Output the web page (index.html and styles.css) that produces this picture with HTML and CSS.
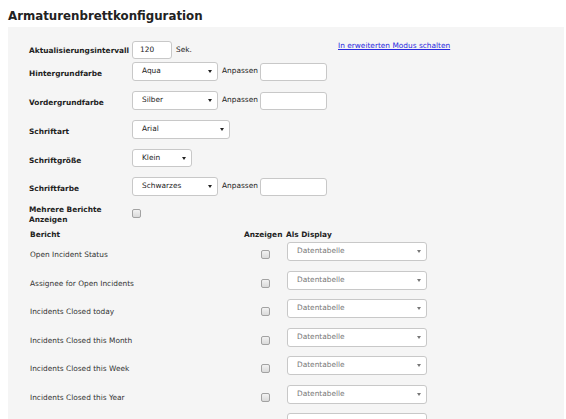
FILE: index.html
```html
<!DOCTYPE html>
<html lang="de">
<head>
<meta charset="utf-8">
<title>Armaturenbrettkonfiguration</title>
<link rel="stylesheet" href="styles.css">
</head>
<body>
<h1 class="title">Armaturenbrettkonfiguration</h1>
<div class="panel">
  <div class="form">
    <div class="row row-first">
      <span class="lbl lbl-first">Aktualisierungsintervall</span>
      <div class="ctrls ctrls-first">
        <div class="field field-sm">120</div>
        <span class="unit">Sek.</span>
      </div>
      <a class="mode-link" href="#">In erweiterten Modus schalten</a>
    </div>
    <div class="row row-tight">
      <span class="lbl">Hintergrundfarbe</span>
      <div class="ctrls">
        <div class="select sel-color"><span>Aqua</span><i class="caret"></i></div>
        <span class="unit">Anpassen</span>
        <div class="field field-custom"></div>
      </div>
    </div>
    <div class="row">
      <span class="lbl">Vordergrundfarbe</span>
      <div class="ctrls">
        <div class="select sel-color"><span>Silber</span><i class="caret"></i></div>
        <span class="unit">Anpassen</span>
        <div class="field field-custom"></div>
      </div>
    </div>
    <div class="row">
      <span class="lbl">Schriftart</span>
      <div class="ctrls">
        <div class="select sel-font"><span>Arial</span><i class="caret"></i></div>
      </div>
    </div>
    <div class="row row-short">
      <span class="lbl">Schriftgröße</span>
      <div class="ctrls">
        <div class="select sel-size"><span>Klein</span><i class="caret"></i></div>
      </div>
    </div>
    <div class="row">
      <span class="lbl">Schriftfarbe</span>
      <div class="ctrls">
        <div class="select sel-color"><span>Schwarzes</span><i class="caret"></i></div>
        <span class="unit">Anpassen</span>
        <div class="field field-custom"></div>
      </div>
    </div>
    <div class="row row-multi">
      <span class="lbl lbl-multi">Mehrere Berichte<br>Anzeigen</span>
      <div class="ctrls">
        <span class="check check-multi"></span>
      </div>
    </div>
  </div>

  <div class="reports">
    <div class="report-head">
      <span class="head-name">Bericht</span>
      <span>Anzeigen</span>
      <span>Als Display</span>
    </div>
    <div class="report-row">
      <span class="report-name">Open Incident Status</span>
      <span class="cell-check"><span class="check check-row"></span></span>
      <div class="select sel-display"><span>Datentabelle</span><i class="caret caret-light"></i></div>
    </div>
    <div class="report-row">
      <span class="report-name">Assignee for Open Incidents</span>
      <span class="cell-check"><span class="check check-row"></span></span>
      <div class="select sel-display"><span>Datentabelle</span><i class="caret caret-light"></i></div>
    </div>
    <div class="report-row">
      <span class="report-name">Incidents Closed today</span>
      <span class="cell-check"><span class="check check-row"></span></span>
      <div class="select sel-display"><span>Datentabelle</span><i class="caret caret-light"></i></div>
    </div>
    <div class="report-row">
      <span class="report-name">Incidents Closed this Month</span>
      <span class="cell-check"><span class="check check-row"></span></span>
      <div class="select sel-display"><span>Datentabelle</span><i class="caret caret-light"></i></div>
    </div>
    <div class="report-row">
      <span class="report-name">Incidents Closed this Week</span>
      <span class="cell-check"><span class="check check-row"></span></span>
      <div class="select sel-display"><span>Datentabelle</span><i class="caret caret-light"></i></div>
    </div>
    <div class="report-row">
      <span class="report-name">Incidents Closed this Year</span>
      <span class="cell-check"><span class="check check-row"></span></span>
      <div class="select sel-display"><span>Datentabelle</span><i class="caret caret-light"></i></div>
    </div>
    <div class="report-row">
      <span class="report-name"></span>
      <span class="cell-check"></span>
      <div class="select sel-display"></div>
    </div>
  </div>
</div>
</body>
</html>
```
FILE: styles.css
```css
html {
  overflow: hidden;
}

body {
  margin: 0;
  padding: 9px 0 0 8px;
  background: #ffffff;
  color: #222222;
  font-family: "DejaVu Sans", Verdana, sans-serif;
  font-size: 7.4px;
  line-height: 8.6px;
}

.title {
  margin: 0 0 4px;
  font-size: 11.8px;
  line-height: 14px;
  font-weight: bold;
  color: #222222;
}

.panel {
  width: 556px;
  height: 440px;
  box-sizing: border-box;
  padding: 14px 0 0 21px;
  background: #f5f5f5;
}

.form {
  display: flex;
  flex-direction: column;
}

.row {
  display: flex;
  align-items: center;
  height: 19px;
  margin-top: 10px;
}

.row-first {
  margin-top: 0;
  height: 18px;
}

.row-tight {
  margin-top: 3px;
}

.row-short {
  height: 18px;
}

.row-multi {
  height: auto;
  margin-top: 9px;
}

.lbl {
  flex: none;
  width: 103px;
  font-weight: bold;
  white-space: nowrap;
  padding-top: 6px;
  color: #222222;
}

.lbl-first {
  padding-top: 2px;
}

.lbl-multi {
  padding-top: 0;
  line-height: 9.6px;
}

.ctrls {
  display: flex;
  align-items: center;
}

.ctrls-first {
  width: 206px;
  flex: none;
}

.unit {
  margin-left: 4px;
  margin-right: 2px;
  color: #222222;
}

.mode-link {
  align-self: flex-start;
  margin-top: 1px;
  color: #2a2ae0;
  text-decoration: underline;
}

.field {
  display: flex;
  align-items: center;
  box-sizing: border-box;
  height: 18px;
  padding-left: 7px;
  background: #ffffff;
  border: 1px solid #c8c8c8;
  border-radius: 3px;
  color: #222222;
}

.field-sm {
  width: 40px;
}

.field-custom {
  width: 67px;
}

.select {
  display: flex;
  align-items: center;
  box-sizing: border-box;
  height: 19px;
  padding: 0 5px 0 9px;
  background: #ffffff;
  border: 1px solid #c8c8c8;
  border-radius: 3px;
  color: #222222;
}

.sel-color {
  width: 86px;
}

.sel-font {
  width: 98px;
}

.sel-size {
  width: 60px;
  height: 18px;
}

.sel-display {
  width: 140px;
  margin-left: 1px;
  color: #777777;
}

.caret {
  margin-left: auto;
  width: 0;
  height: 0;
  border-left: 2px solid transparent;
  border-right: 2px solid transparent;
  border-top: 3px solid #222222;
}

.caret-light {
  border-top-color: #777777;
}

.check {
  display: block;
  box-sizing: border-box;
  width: 9px;
  height: 9px;
  border: 1px solid #a2a2a2;
  border-radius: 2px;
  background: linear-gradient(#f2f2f2, #dadada);
}

.check-multi {
  margin-bottom: 3px;
}

.report-head {
  display: grid;
  grid-template-columns: 215px 42px auto;
  margin-top: 6.5px;
  font-weight: bold;
  color: #222222;
}

.head-name {
  padding-left: 1px;
}

.report-row {
  display: grid;
  grid-template-columns: 215px 42px auto;
  align-items: center;
  height: 19px;
  margin-top: 9.5px;
}

.report-head + .report-row {
  margin-top: 3px;
}

.report-name {
  padding-left: 1px;
  margin-top: 8px;
  color: #333333;
  white-space: nowrap;
}

.cell-check {
  display: flex;
  justify-content: center;
}

.check-row {
  margin-top: 6px;
}
```
